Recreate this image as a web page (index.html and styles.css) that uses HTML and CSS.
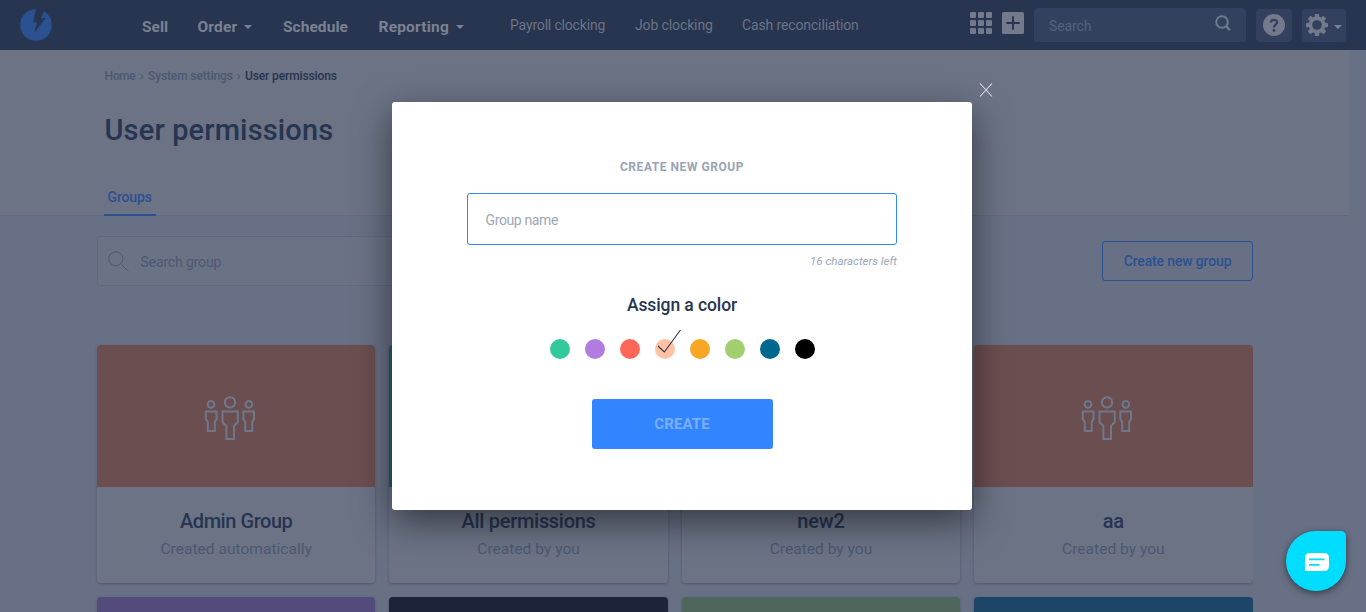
FILE: index.html
```html
<!DOCTYPE html>
<html lang="en">
<head>
<meta charset="utf-8">
<title>User permissions</title>
<link rel="stylesheet" href="styles.css">
</head>
<body>
<svg class="defs" width="0" height="0">
  <symbol id="people" viewBox="0 0 52 46">
    <g fill="none" stroke="currentColor" stroke-width="2">
      <circle cx="26" cy="7.4" r="5.2"/>
      <path d="M18.5 16.5H33.8V27L30 31V44H22.4V31L18.5 27Z"/>
      <circle cx="7" cy="9.4" r="3.3"/>
      <path d="M1.8 16.5H12.5V24L10.8 27V36H3.8V27L1.8 24Z"/>
      <circle cx="44.8" cy="9.4" r="3.3"/>
      <path d="M39.3 16.5H50V24L48.2 27V36H41.2V27L39.3 24Z"/>
    </g>
  </symbol>
</svg>
<header class="navbar">
  <svg class="logo" viewBox="0 0 32 32" width="32" height="32"><circle cx="16" cy="16" r="15.8" fill="#2b5190"/><path fill="#273550" d="M16.3-1L13 13.3H17.3L14 23.9L25.7 9.1H20.7L25 1V-1Z"/></svg>
  <nav class="main-nav">
    <a class="n1">Sell</a>
    <a class="n2">Order<i class="caret"></i></a>
    <a class="n3">Schedule</a>
    <a class="n4">Reporting<i class="caret"></i></a>
  </nav>
  <nav class="sub-nav">
    <a class="s1">Payroll clocking</a>
    <a class="s2">Job clocking</a>
    <a class="s3">Cash reconciliation</a>
  </nav>
  <div class="tools">
    <div class="apps"><i></i><i></i><i></i><i></i><i></i><i></i><i></i><i></i><i></i></div>
    <svg class="plus" viewBox="0 0 22 22" width="22" height="22"><rect width="22" height="22" rx="1.5" fill="#727a8b"/><path d="M11 4.3V17.7M4.3 11H17.7" stroke="#273550" stroke-width="2"/></svg>
    <div class="nav-search"><span>Search</span><svg viewBox="0 0 18 18" width="18" height="18"><g fill="none" stroke="#727a8b" stroke-width="2"><circle cx="8" cy="8" r="5.8"/><path d="M12 12L16 16.3" stroke-width="2.4"/></g></svg></div>
    <div class="tool help"><svg viewBox="0 0 22 22" width="22" height="22"><circle cx="11" cy="11" r="11" fill="#727a8b"/><path d="M7.9 8.6C7.9 4.9 14.1 4.9 14.1 8.3C14.1 10.6 11 10.6 11 13.4" fill="none" stroke="#33415f" stroke-width="2.3"/><circle cx="11" cy="16.4" r="1.4" fill="#33415f"/></svg></div>
    <div class="tool gear"><svg viewBox="-11 -11 22 22" width="22" height="22"><g fill="#727a8b"><circle r="8.4"/><rect x="-2.2" y="-11" width="4.4" height="22" rx="1"/><rect x="-2.2" y="-11" width="4.4" height="22" rx="1" transform="rotate(45)"/><rect x="-2.2" y="-11" width="4.4" height="22" rx="1" transform="rotate(90)"/><rect x="-2.2" y="-11" width="4.4" height="22" rx="1" transform="rotate(135)"/></g><circle r="4.8" fill="#33415f"/></svg><i class="caret"></i></div>
  </div>
</header>
<section class="page-head">
  <div class="crumbs"><span class="c1">Home</span><b>›</b><span class="c2">System settings</span><b>›</b><span class="c3">User permissions</span></div>
  <h1>User permissions</h1>
  <div class="tab"><span>Groups</span></div>
</section>
<main class="content">
  <div class="toolbar">
    <div class="group-search"><svg viewBox="0 0 21 21" width="21" height="21" fill="none" stroke="#4b5872"><circle cx="7.8" cy="7.8" r="7"/><path d="M13 13L20.3 20.3"/></svg><span>Search group</span></div>
    <div class="new-group"><span>Create new group</span></div>
  </div>
  <div class="cards">
    <article class="card"><div class="cover rust"><svg><use href="#people"/></svg></div><h2 class="t1">Admin Group</h2><p class="auto">Created automatically</p></article>
    <article class="card"><div class="cover teal"></div><h2 class="t2">All permissions</h2><p>Created by you</p></article>
    <article class="card"><div class="cover rust"></div><h2 class="t3">new2</h2><p>Created by you</p></article>
    <article class="card"><div class="cover rust"><svg><use href="#people"/></svg></div><h2 class="t3">aa</h2><p>Created by you</p></article>
    <article class="card"><div class="cover purple"></div></article>
    <article class="card"><div class="cover navy"></div></article>
    <article class="card"><div class="cover green"></div></article>
    <article class="card"><div class="cover blue"></div></article>
  </div>
</main>
<div class="modal">
  <svg class="close" viewBox="0 0 14 14" width="14" height="14"><path d="M1 .5L13 13.5M13 .5L1 13.5" stroke="#dde0e4" stroke-width="1.1"/></svg>
  <div class="modal-title"><span>CREATE NEW GROUP</span></div>
  <div class="name-field"><span>Group name</span></div>
  <div class="left"><span>16 characters left</span></div>
  <div class="assign"><span>Assign a color</span></div>
  <div class="swatches">
    <i class="w1"></i><i class="w2"></i><i class="w3"></i><i class="w4"><svg viewBox="0 0 24 25" width="24" height="25"><path d="M1 17L7.3 23L23.5 1" fill="none" stroke="#27344f" stroke-width="1.1"/></svg></i><i class="w5"></i><i class="w6"></i><i class="w7"></i><i class="w8"></i>
  </div>
  <div class="create"><span>CREATE</span></div>
</div>
<div class="chat"><svg viewBox="0 0 24 18" width="24" height="18"><path d="M5 0H19Q24 0 24 5V13Q24 18 19 18H0V5Q0 0 5 0Z" fill="#fff"/><path d="M4 6.4H19.5M4 11.8H14.5" stroke="#00ddff" stroke-width="1.7"/></svg></div>
</body>
</html>
```
FILE: styles.css
```css
* { box-sizing: border-box; }
body { margin: 0; width: 1366px; height: 612px; overflow: hidden; position: relative; background: #687085; font-family: Roboto, "Liberation Sans", sans-serif; color: #273550; }
.defs { position: absolute; }
span, a, h1, h2, p { white-space: nowrap; }
svg { display: block; flex: none; }
.navbar { display: flex; height: 50px; background: #273550; }
.logo { margin: 9px 0 0 20px; }
.main-nav { display: flex; margin-left: 90px; padding-top: 2px; font-size: 15.5px; font-weight: 700; color: #7b8190; height: 52px; line-height: 50px; }
.main-nav a { display: flex; align-items: center; }
.n1 { width: 55.5px; }
.n2 { width: 85.5px; letter-spacing: 0.15px; }
.n3 { width: 95.5px; letter-spacing: 0.05px; }
.n4 { width: 131.5px; letter-spacing: 0.2px; }
.caret { width: 0; height: 0; border: 4px solid transparent; border-top-color: #7b8190; border-bottom: 0; margin-left: 7px; }
.sub-nav { display: flex; font-size: 14px; color: #6b7385; line-height: 51px; width: 460px; }
.s1 { width: 125px; letter-spacing: -0.17px; }
.s2 { width: 107px; letter-spacing: -0.12px; }
.s3 { letter-spacing: -0.13px; }
.tools { display: flex; align-items: flex-start; }
.apps { display: grid; grid-template-columns: repeat(3, 6px); grid-auto-rows: 6px; gap: 2px; margin: 12px 10px 0 0; }
.apps i { background: #727a8b; border-radius: 1px; }
.plus { margin: 12px 10px 0 0; }
.nav-search { display: flex; justify-content: space-between; width: 212px; height: 34px; margin: 8px 10px 0 0; padding: 6px 14px 0 15px; background: #33415f; border-radius: 4px; font-size: 14px; line-height: 25px; color: #56617a; }
.nav-search span { letter-spacing: -0.1px; }
.tool { display: flex; align-items: center; height: 33px; margin-top: 9px; background: #33415f; border-radius: 4px; }
.help { width: 36px; margin-right: 10px; padding: 0 7px 1px; }
.gear { width: 44px; padding: 0 0 1px 4px; }
.gear .caret { margin: 4px 0 0 6px; }
.page-head { width: 1349px; height: 166px; background: #6b7385; border-bottom: 1px solid #616a7e; padding: 17px 0 0 104px; }
.crumbs { display: flex; height: 18px; line-height: 18px; font-size: 12px; font-weight: 500; color: #4b5872; padding-left: 0.5px; letter-spacing: -0.12px; }
.crumbs b { width: 12.5px; text-align: center; font-weight: 500; }
.c1 { width: 31px; letter-spacing: -0.35px; }
.c2 { width: 84.5px; }
.c3 { color: #273550; }
h1 { margin: 25px 0 0 0.5px; font-size: 29px; line-height: 40px; font-weight: 500; letter-spacing: 0.15px; color: #273550; }
.tab { width: 52px; height: 33px; margin-top: 33px; padding-left: 3.5px; line-height: 28px; font-size: 14px; font-weight: 500; letter-spacing: -0.15px; color: #2b5190; border-bottom: 2px solid #2b5190; }
.content { padding: 20px 0 0 97px; width: 1253px; height: 396px; overflow: hidden; }
.toolbar { display: flex; justify-content: space-between; }
.group-search { display: flex; align-items: center; width: 700px; height: 50px; border: 1px solid #5f697e; border-radius: 3px; background: #6a7285; padding-left: 10px; font-size: 14px; color: #4b5872; }
.group-search svg { margin-left: -0.5px; }
.group-search span { margin: 2px 0 0 12px; letter-spacing: -0.15px; }
.new-group { width: 151px; height: 40px; margin-top: 5px; border: 1px solid #2b5190; border-radius: 3px; text-align: center; line-height: 38px; font-size: 14px; font-weight: 500; letter-spacing: -0.15px; color: #2b5190; }
.cards { display: grid; grid-template-columns: repeat(4, 278.4px); gap: 14px; margin-top: 59px; }
.card { height: 238px; background: #6b7385; border-radius: 4px; overflow: hidden; text-align: center; box-shadow: 0 1px 3px #4d586d; }
.cover { height: 142px; padding: 50px 12px 0 0; }
.cover svg { width: 52px; height: 46px; margin: 0 auto; color: #6f788a; }
.rust { background: #6b4e50; }
.teal { background: #27605f; }
.purple { background: #544b7d; }
.navy { background: #1c2439; }
.green { background: #4e665b; }
.blue { background: #1d4567; }
h2 { margin: 19px 0 0; font-size: 20px; line-height: 30px; font-weight: 500; }
.t1 { letter-spacing: -0.45px; }
.t2 { letter-spacing: -0.3px; }
.t3 { letter-spacing: -0.2px; }
p { margin: 0; font-size: 15.5px; line-height: 27px; color: #4b5872; letter-spacing: 0.03px; }
.modal { position: absolute; left: 392px; top: 102px; width: 580px; height: 408px; background: #fff; border-radius: 3px; box-shadow: 0 12px 36px rgba(0,0,0,.5); padding: 55px 75px 0; }
.close { position: absolute; left: 587px; top: -19px; }
.modal-title { text-align: center; height: 20px; line-height: 20px; font-size: 12px; font-weight: 700; letter-spacing: 0.55px; color: #9aa4b5; }
.name-field { height: 52px; margin-top: 16px; border: 1px solid #3385ff; border-radius: 3px; padding-left: 17.5px; line-height: 53px; font-size: 14px; letter-spacing: -0.38px; color: #9da6b7; }
.left { text-align: right; font-style: italic; font-size: 11.5px; line-height: 20px; margin-top: 6px; color: #9da6b7; }
.assign { text-align: center; font-size: 17.5px; font-weight: 500; line-height: 30px; margin-top: 19px; }
.assign span { letter-spacing: -0.1px; }
.swatches { display: flex; justify-content: center; gap: 15px; margin-top: 19px; }
.swatches i { position: relative; width: 20px; height: 20px; border-radius: 50%; }
.swatches svg { position: absolute; left: 2px; top: -10px; }
.w1 { background: #34c99b; }
.w2 { background: #b07ce0; }
.w3 { background: #ff6659; }
.w4 { background: #ffc2a5; }
.w5 { background: #f8a724; }
.w6 { background: #a1cf6e; }
.w7 { background: #00688f; }
.w8 { background: #000; }
.create { width: 181px; height: 50px; margin: 40px auto 0; border-radius: 3px; background: #3385ff; text-align: center; line-height: 50px; font-size: 15px; font-weight: 700; letter-spacing: 0.1px; color: #7aaeff; }
.chat { position: absolute; left: 1286px; top: 531px; width: 60px; height: 60px; border-radius: 30px 5px 30px 30px; background: #00ddff; box-shadow: 0 2px 7px rgba(0,0,0,.5); padding: 22px 0 0 19px; }
```
